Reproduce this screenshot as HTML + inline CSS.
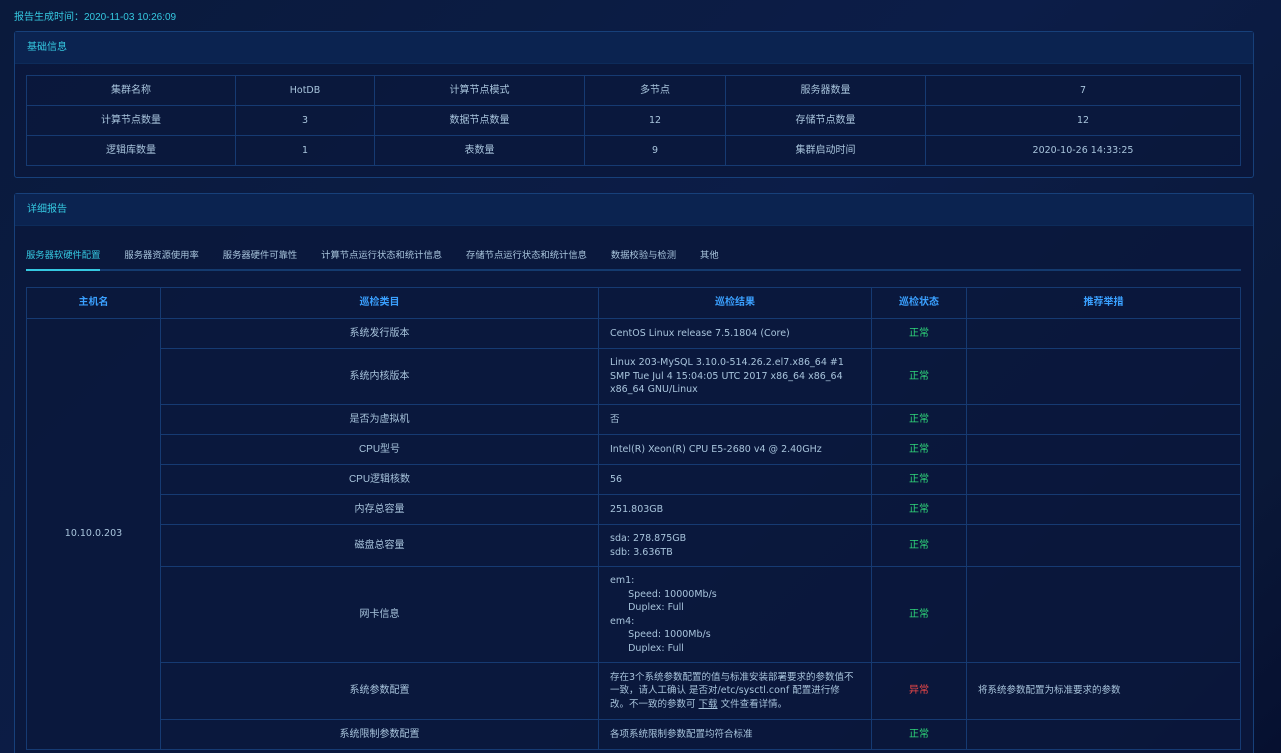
<!DOCTYPE html>
<html><head><meta charset="utf-8"><style>
*{margin:0;padding:0;box-sizing:border-box}
html,body{width:1281px;height:753px;overflow:hidden}
body{background:linear-gradient(135deg,#0a1a3c 0%,#0c1d48 50%,#0a1838 85%,#061030 100%);font-family:"Liberation Sans","Noto Sans CJK SC",sans-serif;font-size:10px;color:#a8c4dc;position:relative}
.top{position:absolute;left:14px;top:11px;color:#35c8e0;font-size:10px;line-height:13px}
.panel{position:absolute;left:14px;width:1240px;border:1px solid #17407a;border-radius:3px;background:rgba(10,24,60,.85)}
.ph{height:32px;background:#0b2350;color:#35c8e0;padding-left:12px;line-height:31px;border-bottom:1px solid #0d2b5a}
table{border-collapse:collapse;position:absolute;left:11px;table-layout:fixed}
td,th{border:1px solid #163a72;text-align:center;font-weight:normal;line-height:13.5px;vertical-align:middle}
.t1 td{height:30px}
.t2 th{height:31px;color:#3aa0ff;font-weight:bold}
.t2 td{height:30px}
.l{text-align:left;padding-left:11px;padding-right:14px;font-family:"DejaVu Sans","Noto Sans CJK SC",sans-serif;font-size:9.5px}
.ok{color:#2fd87a}.bad{color:#f04848}
.tabs{position:absolute;left:11px;top:54px;width:1215px;height:23px;border-bottom:2px solid #143a6e;white-space:nowrap;font-size:9.3px}
.tabs span{display:inline-block;margin-right:24px;color:#a8c4dc;height:23px;line-height:14px}
.tabs span.a{color:#35c8e0;border-bottom:2px solid #35c8e0}
.mono{font-family:"DejaVu Sans","Noto Sans CJK SC",sans-serif;font-size:9.5px}
</style></head><body>
<div class="top">报告生成时间：2020-11-03 10:26:09</div>
<div class="panel" style="top:31px;height:147px">
<div class="ph">基础信息</div>
<table class="t1" style="top:43px;width:1215px">
<colgroup><col style="width:209px"><col style="width:139px"><col style="width:210px"><col style="width:141px"><col style="width:200px"><col></colgroup>
<tr><td>集群名称</td><td class="mono">HotDB</td><td>计算节点模式</td><td>多节点</td><td>服务器数量</td><td class="mono">7</td></tr>
<tr><td>计算节点数量</td><td class="mono">3</td><td>数据节点数量</td><td class="mono">12</td><td>存储节点数量</td><td class="mono">12</td></tr>
<tr><td>逻辑库数量</td><td class="mono">1</td><td>表数量</td><td class="mono">9</td><td>集群启动时间</td><td class="mono">2020-10-26 14:33:25</td></tr>
</table>
</div>
<div class="panel" style="top:193px;height:580px">
<div class="ph">详细报告</div>
<div class="tabs"><span class="a">服务器软硬件配置</span><span>服务器资源使用率</span><span>服务器硬件可靠性</span><span>计算节点运行状态和统计信息</span><span>存储节点运行状态和统计信息</span><span>数据校验与检测</span><span>其他</span></div>
<table class="t2" style="top:93px;width:1215px">
<colgroup><col style="width:134px"><col style="width:438px"><col style="width:273px"><col style="width:95px"><col></colgroup>
<tr><th>主机名</th><th>巡检类目</th><th>巡检结果</th><th>巡检状态</th><th>推荐举措</th></tr>
<tr><td rowspan="10" class="mono">10.10.0.203</td><td>系统发行版本</td><td class="l">CentOS Linux release 7.5.1804 (Core)</td><td class="ok">正常</td><td></td></tr>
<tr><td style="height:56px">系统内核版本</td><td class="l">Linux 203-MySQL 3.10.0-514.26.2.el7.x86_64 #1 SMP Tue Jul 4 15:04:05 UTC 2017 x86_64 x86_64 x86_64 GNU/Linux</td><td class="ok">正常</td><td></td></tr>
<tr><td>是否为虚拟机</td><td class="l">否</td><td class="ok">正常</td><td></td></tr>
<tr><td>CPU型号</td><td class="l">Intel(R) Xeon(R) CPU E5-2680 v4 @ 2.40GHz</td><td class="ok">正常</td><td></td></tr>
<tr><td>CPU逻辑核数</td><td class="l">56</td><td class="ok">正常</td><td></td></tr>
<tr><td>内存总容量</td><td class="l">251.803GB</td><td class="ok">正常</td><td></td></tr>
<tr><td style="height:42px">磁盘总容量</td><td class="l">sda: 278.875GB<br>sdb: 3.636TB</td><td class="ok">正常</td><td></td></tr>
<tr><td style="height:96px">网卡信息</td><td class="l">em1:<br>&nbsp;&nbsp;&nbsp;&nbsp;&nbsp;&nbsp;Speed: 10000Mb/s<br>&nbsp;&nbsp;&nbsp;&nbsp;&nbsp;&nbsp;Duplex: Full<br>em4:<br>&nbsp;&nbsp;&nbsp;&nbsp;&nbsp;&nbsp;Speed: 1000Mb/s<br>&nbsp;&nbsp;&nbsp;&nbsp;&nbsp;&nbsp;Duplex: Full</td><td class="ok">正常</td><td></td></tr>
<tr><td style="height:57px">系统参数配置</td><td class="l">存在3个系统参数配置的值与标准安装部署要求的参数值不一致，请人工确认 是否对/etc/sysctl.conf 配置进行修改。不一致的参数可 <u>下载</u> 文件查看详情。</td><td class="bad">异常</td><td class="l">将系统参数配置为标准要求的参数</td></tr>
<tr><td>系统限制参数配置</td><td class="l">各项系统限制参数配置均符合标准</td><td class="ok">正常</td><td></td></tr>
</table>
</div>
</body></html>
